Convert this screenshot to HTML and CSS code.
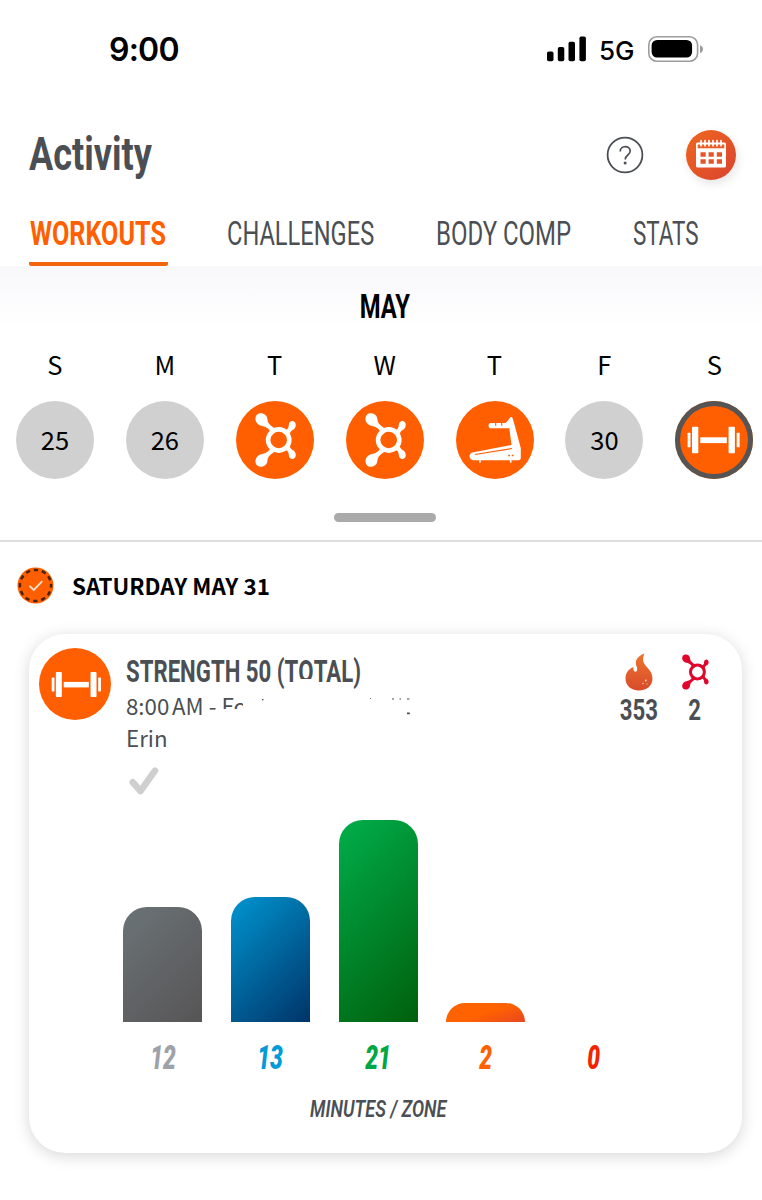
FILE: index.html
```html
<!DOCTYPE html>
<html lang="en">
<head>
    <meta charset="UTF-8">
    <meta name="viewport" content="width=device-width, initial-scale=1.0">
    <title>Activity</title>
    <link rel="stylesheet" href="styles.css">
</head>
<body>
    <!-- shared icons -->
    <svg class="sprite" width="0" height="0">
        <symbol id="splat" viewBox="17 10 44 58">
            <circle cx="42.7" cy="39" r="10.6" fill="none" stroke="currentColor" stroke-width="4.6"/>
            <g fill="currentColor">
                <path d="M24.500 12.200c4.200 0 6.600 2.500 6.900 6 .2 3 1.700 5.500 5.600 8l4 2.800-5.500 5.500c-.3-3.600-2.600-7-6-8.600-1.800-.9-4.800-1-6.700-2.200-5.400-3.600-3.900-11.500 1.700-11.500z"/>
                <path d="M24.500 65.800c4.200 0 6.600-2.500 6.900-6 .2-3 1.700-5.500 5.600-8l4-2.800-5.500-5.500c-.3 3.600-2.600 7-6 8.600-1.800.9-4.800 1-6.700 2.200-5.400 3.600-3.900 11.500 1.700 11.500z"/>
                <path d="M52.800 24c.2-5.400 7-5.200 7 0 0 2.700-1.700 4.300-3.500 5.200-1.500.8-2.300 2.300-2.800 5l-5.300-4.500c3-.6 4.500-2.500 4.600-5.700z"/>
                <path d="M52.800 54c.2 5.400 7 5.200 7 0 0-2.700-1.700-4.300-3.500-5.200-1.500-.8-2.300-2.300-2.800-5l-5.300 4.500c3 .6 4.500 2.500 4.600 5.700z"/>
            </g>
        </symbol>
        <symbol id="dumbbell" viewBox="0 0 78 78">
            <g fill="#fff">
                <rect x="12.600" y="31.700" width="2.900" height="14.600" rx=".6"/>
                <rect x="17" y="25.800" width="6.300" height="26.400" rx=".8"/>
                <rect x="25.300" y="36.300" width="26.500" height="5.800"/>
                <rect x="53.600" y="25.800" width="6.300" height="26.400" rx=".8"/>
                <rect x="61.700" y="31.700" width="2.900" height="14.600" rx=".6"/>
            </g>
        </symbol>
    </svg>

    <div class="status-bar">
        <div class="clock">9:00</div>
        <div class="status-icons">
            <svg class="signal" width="40" height="26" viewBox="0 0 40 26">
                <rect x="0" y="15.500" width="6.500" height="9.800" rx="1.800"/>
                <rect x="10.800" y="11" width="6.500" height="14.300" rx="1.800"/>
                <rect x="21.500" y="5.700" width="6.500" height="19.600" rx="1.800"/>
                <rect x="32.400" y="0.500" width="6.500" height="24.800" rx="1.800"/>
            </svg>
            <span class="network">5G</span>
            <svg class="battery" width="56" height="26" viewBox="0 0 56 26">
                <rect x=".8" y=".8" width="48.800" height="24.400" rx="8" fill="none" stroke="#9c9c9c" stroke-width="1.600"/>
                <rect x="3.600" y="4" width="40.500" height="17.500" rx="5.500"/>
                <path d="M52 9.200c4 1.200 4 6.600 0 7.800z" fill="#9c9c9c"/>
            </svg>
        </div>
    </div>

    <div class="header">
        <h1 class="title"><span class="narrow">Activity</span></h1>
        <svg class="help" width="38" height="38" viewBox="0 0 38 38" fill="none" stroke="#4b4f54">
            <circle cx="19" cy="19" r="17.400" stroke-width="1.800"/>
            <path d="M14.200 15.400c0-6.300 10-6.300 10-.4 0 4.200-5 3.800-5 8.600" stroke-width="1.700"/>
            <circle cx="19.100" cy="27" r="1.500" fill="#4b4f54" stroke="none"/>
        </svg>
        <div class="calendar-button">
            <svg width="32" height="30" viewBox="0 0 32 30">
                <path d="M2.500 3.500h27a1.500 1.500 0 0 1 1.500 1.500V27a1.500 1.500 0 0 1-1.500 1.500h-27A1.500 1.500 0 0 1 1 27V5a1.500 1.500 0 0 1 1.500-1.500z" fill="#fff"/>
                <path d="M2.700 9.300h26.600V5.500H2.700z" fill="#ea5f27"/>
                <path d="M6 1.500v5.200M10 1.500v5.200M14 1.500v5.200M18 1.500v5.200M22 1.500v5.200M26 1.500v5.200" stroke="#fff" stroke-width="1.700" stroke-linecap="round"/>
                <path d="M5.500 13.300h5.200v4.400H5.500zM13.600 13.300h5.200v4.400h-5.200zM21.800 13.300H27v4.400h-5.200zM5.500 20.300h5.200v4.400H5.500zM13.600 20.300h5.200v4.400h-5.200zM21.800 20.300H27v4.400h-5.200z" fill="#e4552a"/>
            </svg>
        </div>
    </div>

    <div class="tabs">
        <div class="tab active"><span class="narrow">WORKOUTS</span></div>
        <div class="tab tab-challenges"><span class="narrow">CHALLENGES</span></div>
        <div class="tab tab-body"><span class="narrow">BODY COMP</span></div>
        <div class="tab tab-stats"><span class="narrow">STATS</span></div>
    </div>

    <div class="calendar">
        <div class="month"><span class="narrow">MAY</span></div>
        <div class="week">
            <div class="day"><div class="day-name">S</div><div class="circle">25</div></div>
            <div class="day"><div class="day-name">M</div><div class="circle">26</div></div>
            <div class="day"><div class="day-name">T</div><div class="circle workout"><svg width="44" height="58"><use href="#splat"/></svg></div></div>
            <div class="day"><div class="day-name">W</div><div class="circle workout"><svg width="44" height="58"><use href="#splat"/></svg></div></div>
            <div class="day"><div class="day-name">T</div><div class="circle workout">
                <svg width="78" height="78" viewBox="0 0 78 78">
                    <path d="M35 22h14.500l2-2 2.500-3.300c1-1.300 2.300-.7 2.600.5l1 3 7.200 27V57q0 2.200-2.200 2.200H18c-5 0-6-6.200-1.800-7.600L55.500 44l-2.200-16.700H35c-3.300 0-3.300-5.300 0-5.300z" fill="#fff"/>
                    <path d="M19 53.500l37-6M39.700 21.500v3.300M45.700 21.500v3.300" stroke="#ff5f00" stroke-width="1.100"/>
                    <path d="M24 59v2.800M54.700 59v2.800" stroke="#fff" stroke-width="1.500"/>
                    <path d="M52.300 54.500h1.700M55.800 54.500h1.700" stroke="#ff5f00" stroke-width="1.700"/>
                </svg>
            </div></div>
            <div class="day"><div class="day-name">F</div><div class="circle">30</div></div>
            <div class="day"><div class="day-name">S</div><div class="circle workout selected"><svg width="78" height="78"><use href="#dumbbell"/></svg></div></div>
        </div>
        <div class="handle"></div>
    </div>

    <div class="date-row">
        <svg width="37" height="37" viewBox="0 0 37 37" fill="none">
            <circle cx="18.500" cy="18.500" r="18" fill="#ff5f00"/>
            <circle cx="18.500" cy="18.500" r="15.600" stroke="#47240f" stroke-width="2.500" stroke-dasharray="4.400 3.768" stroke-dashoffset="2.200"/>
            <path d="M13 19.300l3.800 3.600 8-8.300" stroke="#ffe3cf" stroke-width="1.800" stroke-linecap="round"/>
        </svg>
        <h2>SATURDAY MAY 31</h2>
    </div>

    <div class="card">
        <div class="card-top">
            <div class="card-icon"><svg width="72" height="72" viewBox="-.8 .5 76 76"><use href="#dumbbell" width="78" height="78"/></svg></div>
            <div class="info">
                <h3><span class="narrow">STRENGTH 50 (T<span class="cut-o">O</span>TAL)</span></h3>
                <p class="place">8:00<span class="thin"> </span>AM - <span class="cut-place">Fo</span>
                    <svg class="specks" width="152" height="18" viewBox="0 0 152 18" fill="#4b4f54">
                        <path d="M2 1h1.500v1.200H2zM110 0h1v.8H110zM132 .5h2v1H132zM139.500 .5h1.500v1h-1.500zM147 .5h2.500v1H147zM147 14.500h2.800v1.800H147z"/>
                    </svg>
                </p>
                <p>Erin</p>
                <svg class="check" width="30" height="28" viewBox="0 0 30 28" fill="none">
                    <path d="M3.700 15.200l7.800 8.800L26 3.700" stroke="#cfcfcf" stroke-width="6.600" stroke-linecap="round" stroke-linejoin="round"/>
                </svg>
            </div>
            <div class="stat">
                <svg width="28" height="38" viewBox="0 0 28 38">
                    <defs>
                        <linearGradient id="fire" x1="0" y1="0" x2="0" y2="1">
                            <stop offset="0" stop-color="#ee742f"/>
                            <stop offset="1" stop-color="#d84b2a"/>
                        </linearGradient>
                    </defs>
                    <path d="M19.500.5C12 3 9.300 8.500 11.600 13.500c1.800 4-.8 6.700-2.500 4.500-.9-1.200-.7-2.800-.6-4C2.500 16.500.5 21 .5 25.500.5 32.500 6 37.500 14 37.500s13.500-5 13.500-12c0-4.800-2.200-8-5.700-11.600C17.800 9.800 17 6 19.500.5z" fill="url(#fire)"/>
                    <g fill="#fbd5c3"><circle cx="20.800" cy="27.500" r=".9"/><circle cx="18" cy="30.500" r=".7"/><circle cx="22" cy="31" r=".6"/></g>
                </svg>
                <span class="narrow">353</span>
            </div>
            <div class="stat stat-splat">
                <svg width="30" height="38"><use href="#splat"/></svg>
                <span class="narrow">2</span>
            </div>
        </div>

        <div class="chart">
            <div class="zone gray"><div class="bar" style="height: 115.5px"></div><span class="narrow">12</span></div>
            <div class="zone blue"><div class="bar" style="height: 125px"></div><span class="narrow">13</span></div>
            <div class="zone green"><div class="bar" style="height: 202px"></div><span class="narrow">21</span></div>
            <div class="zone orange"><div class="bar" style="height: 19px"></div><span class="narrow">2</span></div>
            <div class="zone red"><div class="bar" style="height: 0px"></div><span class="narrow">0</span></div>
        </div>
        <div class="chart-label"><span class="narrow">MINUTES / ZONE</span></div>
    </div>
</body>
</html>
```
FILE: styles.css
```css
* {
    box-sizing: border-box;
}

body {
    margin: 0;
    width: 762px;
    height: 1200px;
    overflow: hidden;
    background: #fff;
    color: #000;
    font-family: "Noto Sans CJK JP", "Noto Sans", sans-serif;
}

h1, h2, h3, p {
    margin: 0;
    font-weight: normal;
}

svg {
    display: block;
    flex-shrink: 0;
}

.sprite {
    display: none;
}

/* condensed headings */
.narrow {
    display: inline-block;
    font-family: Roboto, sans-serif;
    white-space: nowrap;
    transform: scaleX(0.7);
    transform-origin: left center;
}

.status-bar {
    display: flex;
    justify-content: space-between;
    height: 100px;
    padding: 0 58px 0 109px;
    font-family: Inter, sans-serif;
}

.clock {
    padding-top: 30px;
    font-size: 32px;
    line-height: 40px;
    font-weight: 600;
    letter-spacing: -0.8px;
}

.status-icons {
    display: flex;
    height: 26px;
    margin-top: 36px;
}

.network {
    width: 36px;
    margin: 0 13px 0 12px;
    font-size: 26px;
    line-height: 30px;
    font-weight: 450;
}

.header {
    display: flex;
    align-items: center;
    height: 110px;
    padding: 0 26px 0 29px;
}

.title {
    flex: 1;
    color: #4b4f54;
    line-height: 56px;
}

.title .narrow {
    font-size: 47px;
    font-weight: 700;
    transform: scaleX(0.767);
}

.help {
    margin-right: 42px;
}

.calendar-button {
    display: flex;
    align-items: center;
    justify-content: center;
    width: 50px;
    height: 50px;
    border-radius: 50%;
    background: linear-gradient(135deg, #f0671f, #d8432f);
    box-shadow: 2px 4px 10px rgba(0, 0, 0, 0.1);
}

.calendar-button svg {
    margin-top: -2px;
}

.tabs {
    display: flex;
    height: 56px;
    padding-left: 29px;
    color: #4b4f54;
    font-size: 34px;
    line-height: 41px;
}

.tab {
    width: 139px;
    height: 56px;
    margin-right: 59px;
}

.tab.active {
    color: #ff5f00;
    font-weight: 700;
    border-bottom: 4px solid #f4650f;
    border-radius: 2px;
}

.tab.active .narrow {
    margin-left: 1px;
    transform: scaleX(0.74);
}

.tab-challenges {
    width: 150px;
}

.tab-challenges .narrow {
    transform: scaleX(0.695);
}

.tab-body {
    width: 137px;
}

.tab-body .narrow {
    transform: scaleX(0.705);
}

.tab-stats {
    width: 70px;
    margin-right: 0;
}

.tab-stats .narrow {
    margin-left: 1px;
    transform: scaleX(0.66);
}

.calendar {
    height: 276px;
    border-bottom: 2px solid #dedede;
    background: linear-gradient(#f8f8fb, #fff 62px);
}

.month {
    display: flex;
    justify-content: center;
    padding-top: 17px;
    padding-left: 8px;
    font-size: 34px;
    line-height: 46px;
    font-weight: 700;
}

.month .narrow {
    transform-origin: center;
}

.week {
    display: flex;
    height: 184px;
}

.day {
    flex: 0 0 109.900px;
    display: flex;
    flex-direction: column;
    align-items: center;
    font-size: 25.5px;
}

.day-name {
    height: 72px;
    padding-top: 16px;
    line-height: 38px;
}

.circle {
    display: flex;
    align-items: center;
    justify-content: center;
    width: 78px;
    height: 78px;
    padding-bottom: 3px;
    border-radius: 50%;
    background: #d0d0d0;
}

.workout {
    padding-bottom: 0;
    background: #ff5f00;
    color: #fff;
}

.selected {
    box-shadow: inset 0 0 0 5px #555;
}

.handle {
    width: 102px;
    height: 9px;
    margin-left: 334px;
    border-radius: 5px;
    background: #aaa;
}

.date-row {
    display: flex;
    align-items: center;
    gap: 18px;
    height: 92px;
    padding: 0 0 5px 17px;
}

.date-row h2 {
    padding-bottom: 2px;
    font-size: 22.4px;
    line-height: 34px;
    font-weight: 700;
}

.card {
    width: 713px;
    height: 519px;
    margin-left: 29px;
    border-radius: 36px;
    background: #fff;
    box-shadow: 0 3px 16px rgba(0, 0, 0, 0.16);
}

.card-top {
    display: flex;
    height: 186px;
    padding: 14px 0 0 10px;
}

.card-icon {
    width: 72px;
    height: 72px;
    border-radius: 50%;
    background: #ff5f00;
}

.info {
    width: 495px;
    padding-left: 15px;
    color: #4b4f54;
    font-size: 22.3px;
    line-height: 32px;
}

.info h3 {
    height: 42px;
    font-size: 31px;
    line-height: 41px;
}

.info h3 .narrow {
    font-weight: 700;
    transform: scaleX(0.716);
}

/* part of the class name and studio is blanked out */
.cut-o {
    display: inline-block;
    clip-path: inset(0 0 13px 0);
}

.place {
    display: flex;
    height: 31px;
    line-height: 31px;
    white-space: pre;
}

.thin {
    font-size: 12px;
}

.cut-place {
    clip-path: inset(0 4px 12px 0);
}

.specks {
    margin: 8px 0 0 13px;
}

.check {
    margin: 14px 0 0 3px;
}

.stat {
    display: flex;
    flex-direction: column;
    align-items: center;
    width: 66px;
    padding-top: 5px;
    color: #4b4f54;
    font-size: 30px;
    line-height: 36px;
    font-weight: 700;
}

.stat .narrow {
    margin-top: 1px;
    transform-origin: center;
    transform: scaleX(0.74);
}

.stat-splat {
    width: 46px;
}

.stat-splat svg {
    color: #e1062b;
}

.chart {
    display: flex;
    height: 260px;
    padding-left: 80px;
}

.zone {
    display: flex;
    flex-direction: column;
    justify-content: flex-end;
    align-items: center;
    width: 107.700px;
    padding-bottom: 8px;
    font-size: 34px;
    line-height: 44px;
    font-style: italic;
    font-weight: 900;
}

.zone .narrow {
    height: 44px;
    margin-top: 6px;
    padding-top: 7px;
    transform-origin: center;
    transform: scaleX(0.67);
}

.bar {
    width: 79px;
    border-radius: 24px 24px 0 0;
}

.gray { color: #9ea2a8; }
.blue { color: #009bd9; }
.green { color: #00a744; }
.orange { color: #ff6100; }
.red { color: #f32300; }

.gray .bar { background: linear-gradient(135deg, #6b7377, #575556); }
.blue .bar { background: linear-gradient(135deg, #0095d0, #003468); }
.green .bar { background: linear-gradient(135deg, #00ae4b, #005f0c); }
.orange .bar { background: linear-gradient(160deg, #ff6200 50%, #e84820); }

.chart-label {
    display: flex;
    justify-content: center;
    width: 699px;
    color: #4b4f54;
    font-size: 24px;
    line-height: 58px;
    font-style: italic;
    font-weight: 600;
}

.chart-label .narrow {
    transform-origin: center;
    transform: scaleX(0.755);
}
```
